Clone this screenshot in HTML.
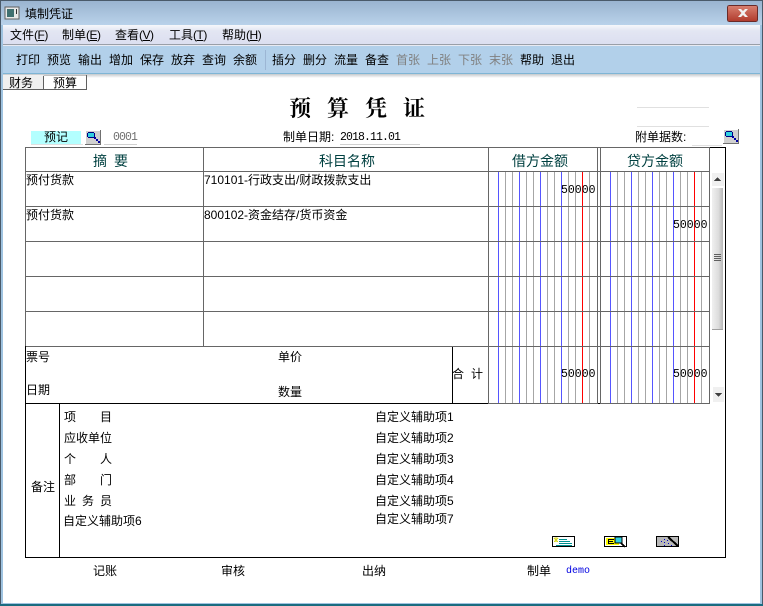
<!DOCTYPE html>
<html><head><meta charset="utf-8">
<style>
html,body{margin:0;padding:0;background:#fff}
body{width:763px;height:606px;position:relative;overflow:hidden;font:12px/14px "WenQuanYi Zen Hei","Liberation Sans",sans-serif;color:#000}
.a{position:absolute;white-space:nowrap}
.a i{font-style:normal;letter-spacing:-.5px}
.h{position:absolute;font-size:14px;line-height:16px;color:#004040;white-space:nowrap}
.n{position:absolute;font:12px/14px "Liberation Mono",monospace;letter-spacing:0;white-space:nowrap}
.g{color:#808080}
svg{position:absolute;left:0;top:0}
</style></head><body>
<svg width="763" height="606" shape-rendering="crispEdges">
<defs>
<linearGradient id="t" x1="0" y1="0" x2="0" y2="1"><stop offset="0" stop-color="#9ab4d0"/><stop offset="1" stop-color="#b9d2ea"/></linearGradient>
<linearGradient id="me" x1="0" y1="0" x2="0" y2="1"><stop offset="0" stop-color="#f6f7fb"/><stop offset=".3" stop-color="#e3e6f3"/><stop offset="1" stop-color="#dcdff0"/></linearGradient>
<linearGradient id="sh" x1="0" y1="0" x2="0" y2="1"><stop offset="0" stop-color="#c4c8cc"/><stop offset="1" stop-color="#ffffff"/></linearGradient>
<linearGradient id="x" x1="0" y1="0" x2="0" y2="1"><stop offset="0" stop-color="#d88070"/><stop offset="1" stop-color="#b03a2c"/></linearGradient>
<linearGradient id="th" x1="0" y1="0" x2="1" y2="0"><stop offset="0" stop-color="#f0f0f0"/><stop offset=".6" stop-color="#dcdcdc"/><stop offset="1" stop-color="#b8b8b8"/></linearGradient>
<pattern id="col" x="498" y="0" width="21" height="10" patternUnits="userSpaceOnUse"><rect x="0" width="1" height="10" fill="#5555ff"/><rect x="7" width="1" height="10" fill="#a6a6a6"/><rect x="14" width="1" height="10" fill="#a6a6a6"/></pattern>
<pattern id="col2" x="610" y="0" width="21" height="10" patternUnits="userSpaceOnUse"><rect x="0" width="1" height="10" fill="#5555ff"/><rect x="7" width="1" height="10" fill="#a6a6a6"/><rect x="14" width="1" height="10" fill="#a6a6a6"/></pattern>
</defs>
<!-- window frame -->
<rect x="0" y="0" width="763" height="606" fill="#9fc3e0"/>
<rect x="0" y="0" width="763" height="1" fill="#4a5a6a"/>
<rect x="0" y="0" width="1" height="606" fill="#4a5a6a"/>
<rect x="762" y="0" width="1" height="606" fill="#4a5a6a"/>
<rect x="0" y="604" width="763" height="2" fill="#1a6c80"/>
<rect x="1" y="1" width="761" height="24" fill="url(#t)"/>
<rect x="3" y="25" width="757" height="19" fill="url(#me)"/>
<rect x="3" y="44" width="757" height="1" fill="#9a9fa8"/>
<rect x="3" y="45" width="757" height="1" fill="#e8eaf2"/>
<rect x="3" y="46" width="757" height="27" fill="#b2d0ea"/>
<rect x="3" y="73" width="757" height="1" fill="#7fb5d5"/>
<rect x="3" y="74" width="757" height="4" fill="url(#sh)"/>
<rect x="3" y="78" width="757" height="525" fill="#fff"/>
<rect x="265" y="50" width="1" height="20" fill="#9cb6d4"/>
<!-- title icon -->
<rect x="5" y="7" width="14" height="12" fill="#e8e8e8" stroke="#606060"/>
<rect x="7" y="9" width="7" height="8" fill="#407070"/>
<rect x="16" y="9" width="1" height="5" fill="#303030"/>
<!-- close -->
<rect x="727.5" y="5.5" width="30" height="16" rx="2" fill="url(#x)" stroke="#6a2a28"/>
<path d="M738 9l3 0 2 2 2-2 3 0-3.500 4 3.500 4-3 0-2-2-2 2-3 0 3.500-4z" fill="#f2f2f2" shape-rendering="auto"/>
<!-- tabs -->
<rect x="3" y="75" width="40" height="15" fill="#f0f0f0"/>
<rect x="3" y="89" width="41" height="1" fill="#606060"/><rect x="43" y="76" width="1" height="14" fill="#606060"/>
<rect x="44" y="75" width="43" height="15" fill="#fff"/>
<rect x="44" y="75" width="43" height="1" fill="#c0c0c0"/>
<rect x="44" y="89" width="43" height="1" fill="#606060"/><rect x="86" y="75" width="1" height="15" fill="#606060"/>
<!-- top right lines -->
<rect x="637" y="107" width="72" height="1" fill="#e0e0e0"/>
<rect x="637" y="126" width="72" height="1" fill="#e0e0e0"/>
<!-- info row -->
<rect x="31" y="131" width="50" height="13" fill="#b3ffff"/>
<rect x="31" y="144" width="52" height="1" fill="#e0e0e0"/>
<rect x="104" y="144" width="33" height="1" fill="#d0d0d0"/>
<rect x="340" y="144" width="80" height="1" fill="#d0d0d0"/>
<rect x="692" y="145" width="30" height="1" fill="#e0e0e0"/>
<g>
<rect x="85" y="130" width="15" height="14" fill="#d0d0d0"/>
<rect x="85" y="130" width="15" height="1" fill="#fff"/><rect x="85" y="130" width="1" height="14" fill="#fff"/>
<rect x="100" y="130" width="1" height="15" fill="#707070"/><rect x="85" y="144" width="16" height="1" fill="#707070"/>
<rect x="88" y="132" width="6" height="6" fill="#30d0e0"/><rect x="88" y="132" width="6" height="1" fill="#000080"/><rect x="88" y="137" width="6" height="1" fill="#000080"/><rect x="87" y="133" width="1" height="4" fill="#000080"/><rect x="94" y="133" width="1" height="4" fill="#000080"/>
<path d="M94 137h2v2h2v2h2v2h-2v-2h-2v-2h-2z" fill="#0000a0"/>
</g>
<g transform="translate(638,0)">
<rect x="85" y="129" width="15" height="14" fill="#d0d0d0"/>
<rect x="85" y="129" width="15" height="1" fill="#fff"/><rect x="85" y="129" width="1" height="14" fill="#fff"/>
<rect x="100" y="129" width="1" height="15" fill="#707070"/><rect x="85" y="143" width="16" height="1" fill="#707070"/>
<rect x="88" y="131" width="6" height="6" fill="#30d0e0"/><rect x="88" y="131" width="6" height="1" fill="#000080"/><rect x="88" y="136" width="6" height="1" fill="#000080"/><rect x="87" y="132" width="1" height="4" fill="#000080"/><rect x="94" y="132" width="1" height="4" fill="#000080"/>
<path d="M94 136h2v2h2v2h2v2h-2v-2h-2v-2h-2z" fill="#0000a0"/>
</g>
<!-- grid columns -->
<rect x="498" y="172" width="92" height="231" fill="url(#col)"/>
<rect x="610" y="172" width="92" height="231" fill="url(#col2)"/>
<rect x="582" y="172" width="1" height="231" fill="#ff0000"/>
<rect x="694" y="172" width="1" height="231" fill="#ff0000"/>
<!-- table lines -->
<g fill="#666666">
<rect x="25" y="147" width="685" height="1"/>
<rect x="25" y="171" width="685" height="1"/>
<rect x="25" y="206" width="685" height="1"/>
<rect x="25" y="241" width="685" height="1"/>
<rect x="25" y="276" width="685" height="1"/>
<rect x="25" y="311" width="685" height="1"/>
<rect x="25" y="346" width="685" height="1"/>
<rect x="25" y="147" width="1" height="200"/>
<rect x="203" y="147" width="1" height="200"/>
<rect x="488" y="147" width="1" height="256"/>
<rect x="597" y="147" width="1" height="256"/>
<rect x="600" y="147" width="1" height="256"/>
<rect x="709" y="147" width="1" height="256"/>
<rect x="488" y="403" width="222" height="1"/>
</g>
<g fill="#000">
<rect x="25" y="346" width="1" height="212"/>
<rect x="452" y="347" width="1" height="56"/>
<rect x="26" y="403" width="462" height="1"/>
<rect x="710" y="147" width="16" height="1"/>
<rect x="725" y="147" width="1" height="411"/>
<rect x="59" y="404" width="1" height="153"/>
<rect x="25" y="557" width="701" height="1"/>
<rect x="598" y="403" width="2" height="1"/>
</g>
<!-- scrollbar -->
<rect x="712" y="173" width="12" height="13" fill="#f0f0f0"/>
<path d="M714 181h7l-3.500-4z" fill="#404040"/>
<rect x="712" y="188" width="11" height="141" fill="url(#th)"/>
<rect x="712" y="329" width="11" height="1" fill="#a0a0a0"/>
<rect x="714" y="254" width="7" height="1" fill="#606060"/><rect x="714" y="256" width="7" height="1" fill="#606060"/><rect x="714" y="258" width="7" height="1" fill="#606060"/><rect x="714" y="260" width="7" height="1" fill="#606060"/>
<rect x="713" y="387" width="11" height="15" fill="#f0f0f0"/>
<path d="M715 393h7l-3.500 4z" fill="#404040"/>
<!-- bottom icons -->
<rect x="552.500" y="536.500" width="22" height="10" fill="#fff" stroke="#000"/>
<path d="M554 538l4 4M558 538l-4 4M556 537v5" stroke="#d8d820" fill="none"/>
<rect x="559" y="539" width="8" height="1" fill="#009090"/><rect x="559" y="541" width="11" height="1" fill="#009090"/><rect x="559" y="543" width="13" height="1" fill="#009090"/><rect x="556" y="545" width="16" height="1" fill="#009090"/>
<rect x="604.500" y="536.500" width="22" height="10" fill="#fff" stroke="#000"/>
<rect x="606" y="538" width="13" height="7" fill="#ffff00"/>
<rect x="608" y="539" width="6" height="1" fill="#000"/><rect x="608" y="541" width="5" height="1" fill="#000"/><rect x="608" y="543" width="6" height="1" fill="#000"/><rect x="608" y="539" width="1" height="5" fill="#000"/>
<rect x="615" y="537" width="7" height="6" fill="#30d0e0" stroke="#000"/>
<path d="M621 543l4 4" stroke="#000" stroke-width="2"/>
<rect x="656.500" y="536.500" width="22" height="10" fill="#b8b8b8" stroke="#000"/>
<path d="M668 537l10 9" stroke="#000" stroke-width="2"/>
<rect x="661" y="541" width="1" height="1" fill="#0000c0"/><rect x="664" y="539" width="1" height="1" fill="#0000c0"/><rect x="664" y="542" width="1" height="1" fill="#0000c0"/><rect x="664" y="545" width="1" height="1" fill="#0000c0"/><rect x="668" y="543" width="1" height="1" fill="#0000c0"/><rect x="671" y="545" width="1" height="1" fill="#0000c0"/><rect x="667" y="540" width="1" height="1" fill="#0000c0"/>
</svg>

<div class="a" style="left:25px;top:7px">填制凭证</div>
<div class="a" style="left:10px;top:28px">文件<i>(<u>F</u>)</i></div>
<div class="a" style="left:62px;top:28px">制单<i>(<u>E</u>)</i></div>
<div class="a" style="left:115px;top:28px">查看<i>(<u>V</u>)</i></div>
<div class="a" style="left:169px;top:28px">工具<i>(<u>T</u>)</i></div>
<div class="a" style="left:222px;top:28px">帮助<i>(<u>H</u>)</i></div>

<div class="a" style="left:16px;top:53px">打印</div>
<div class="a" style="left:47px;top:53px">预览</div>
<div class="a" style="left:78px;top:53px">输出</div>
<div class="a" style="left:109px;top:53px">增加</div>
<div class="a" style="left:140px;top:53px">保存</div>
<div class="a" style="left:171px;top:53px">放弃</div>
<div class="a" style="left:202px;top:53px">查询</div>
<div class="a" style="left:233px;top:53px">余额</div>
<div class="a" style="left:272px;top:53px">插分</div>
<div class="a" style="left:303px;top:53px">删分</div>
<div class="a" style="left:334px;top:53px">流量</div>
<div class="a" style="left:365px;top:53px">备查</div>
<div class="a g" style="left:396px;top:53px">首张</div>
<div class="a g" style="left:427px;top:53px">上张</div>
<div class="a g" style="left:458px;top:53px">下张</div>
<div class="a g" style="left:489px;top:53px">末张</div>
<div class="a" style="left:520px;top:53px">帮助</div>
<div class="a" style="left:551px;top:53px">退出</div>

<div class="a" style="left:9px;top:76px">财务</div>
<div class="a" style="left:53px;top:76px">预算</div>

<div class="a" style="left:289px;top:94px;font:bold 22px/28px 'Noto Serif CJK SC',serif;letter-spacing:16px">预算凭证</div>

<div class="a" style="left:44px;top:130px">预记</div>
<div class="n" style="left:113px;top:131px;color:#707070;font-size:11.500px;letter-spacing:-.9px">0001</div>
<div class="a" style="left:283px;top:130px">制单日期:</div>
<div class="n" style="left:340px;top:131px;font-size:11.500px;letter-spacing:-.9px">2018.11.01</div>
<div class="a" style="left:635px;top:130px">附单据数:</div>

<div class="h" style="left:93px;top:153px">摘</div>
<div class="h" style="left:114px;top:153px">要</div>
<div class="h" style="left:319px;top:153px">科目名称</div>
<div class="h" style="left:512px;top:153px">借方金额</div>
<div class="h" style="left:627px;top:153px">贷方金额</div>

<div class="a" style="left:26px;top:173px">预付货款</div>
<div class="a" style="left:204px;top:173px">710101-行政支出/财政拨款支出</div>
<div class="a" style="left:26px;top:208px">预付货款</div>
<div class="a" style="left:204px;top:208px">800102-资金结存/货币资金</div>
<div class="n" style="left:561px;top:184px;font-size:11.500px">50000</div>
<div class="n" style="left:673px;top:219px;font-size:11.500px">50000</div>
<div class="n" style="left:561px;top:368px;font-size:11.500px">50000</div>
<div class="n" style="left:673px;top:368px;font-size:11.500px">50000</div>

<div class="a" style="left:26px;top:350px">票号</div>
<div class="a" style="left:26px;top:383px">日期</div>
<div class="a" style="left:278px;top:350px">单价</div>
<div class="a" style="left:278px;top:385px">数量</div>
<div class="a" style="left:452px;top:367px">合</div>
<div class="a" style="left:471px;top:367px">计</div>

<div class="a" style="left:31px;top:480px">备注</div>
<div class="a" style="left:64px;top:410px">项</div><div class="a" style="left:100px;top:410px">目</div>
<div class="a" style="left:64px;top:431px">应收单位</div>
<div class="a" style="left:64px;top:452px">个</div><div class="a" style="left:100px;top:452px">人</div>
<div class="a" style="left:64px;top:473px">部</div><div class="a" style="left:100px;top:473px">门</div>
<div class="a" style="left:64px;top:494px">业</div><div class="a" style="left:82px;top:494px">务</div><div class="a" style="left:100px;top:494px">员</div>
<div class="a" style="left:63px;top:514px">自定义辅助项6</div>
<div class="a" style="left:375px;top:410px">自定义辅助项1</div>
<div class="a" style="left:375px;top:431px">自定义辅助项2</div>
<div class="a" style="left:375px;top:452px">自定义辅助项3</div>
<div class="a" style="left:375px;top:473px">自定义辅助项4</div>
<div class="a" style="left:375px;top:494px">自定义辅助项5</div>
<div class="a" style="left:375px;top:512px">自定义辅助项7</div>

<div class="a" style="left:93px;top:564px">记账</div>
<div class="a" style="left:221px;top:564px">审核</div>
<div class="a" style="left:362px;top:564px">出纳</div>
<div class="a" style="left:527px;top:564px">制单</div>
<div class="n" style="left:566px;top:565px;color:#0000e0;font-size:10px">demo</div>
</body></html>
